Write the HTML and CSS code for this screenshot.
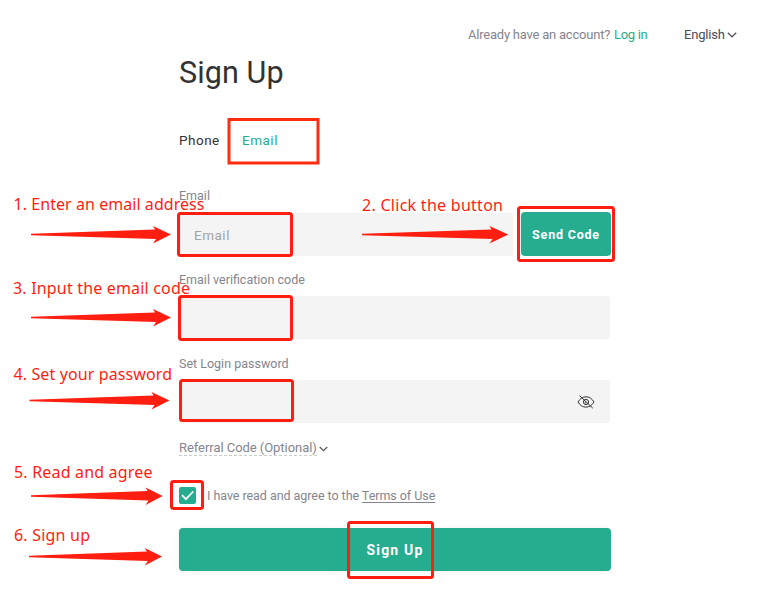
FILE: index.html
```html
<!DOCTYPE html>
<html lang="en">
<head>
<meta charset="utf-8">
<title>Sign Up</title>
<link rel="stylesheet" href="styles.css">
</head>
<body>
<header class="topbar">
  <span class="topbar-hint">Already have an account?</span>
  <a class="login">Log in</a>
  <span class="language">English</span>
  <svg class="chevron" width="10" height="6" viewBox="0 0 10 6"><path d="M.8.8 5 4.8 9.2.8"/></svg>
</header>
<main class="signup">
  <h1>Sign Up</h1>
  <nav class="tabs"><span class="tab">Phone</span><span class="tab active">Email</span></nav>
  <section class="field">
    <label>Email</label>
    <div class="row"><div class="input email"><span>Email</span></div><button class="send">Send Code</button></div>
  </section>
  <section class="field">
    <label>Email verification code</label>
    <div class="input"></div>
  </section>
  <section class="field">
    <label>Set Login password</label>
    <div class="input password">
      <svg width="18" height="14" viewBox="0 0 18 14"><path d="M1 7C3 3.6 5.7 1.8 9 1.8S15 3.6 17 7c-2 3.4-4.7 5.1-8 5.1S3 10.400 1 7Z"/><circle cx="9" cy="7" r="2.6"/><path d="M2.500.600 15.800 13.200"/><path d="m7.800 7.200 1.400 1.100"/></svg>
    </div>
  </section>
  <div class="referral"><span>Referral Code (Optional)</span><svg class="chevron" width="9" height="6" viewBox="0 0 10 6"><path d="M.8.8 5 4.800 9.200.8"/></svg></div>
  <div class="agree">
    <span class="check"><svg width="17" height="17" viewBox="0 0 17 17"><path d="m3 8.200 3.900 3.900 7.300-7.600"/></svg></span>
    <span class="agree-text">I have read and agree to the <a>Terms of Use</a></span>
  </div>
  <button class="submit">Sign Up</button>
</main>
<svg class="guide" width="766" height="598" viewBox="0 0 766 598">
  <defs><path id="arrow" d="M0-.8 124-5l-2-3.500L140 0l-18 9 3-4.600L0 .8Z"/></defs>
  <g class="frames">
    <rect class="square" x="229" y="119.500" width="89" height="43.500"/>
    <rect x="178.500" y="213.500" width="113" height="42" rx="2"/>
    <rect x="179.500" y="296.500" width="112" height="43" rx="2"/>
    <rect x="180.500" y="380.500" width="112" height="40" rx="2"/>
    <rect x="518.500" y="207.500" width="95" height="53" rx="2"/>
    <rect x="171.500" y="481.500" width="31" height="27" rx="2"/>
    <rect x="348.500" y="522.500" width="84" height="55" rx="2"/>
  </g>
  <g class="arrows">
    <use href="#arrow" x="31" y="234.500"/>
    <use href="#arrow" x="31" y="317.500"/>
    <use href="#arrow" x="29.500" y="400.500"/>
    <use href="#arrow" transform="translate(362 234.500) scale(1.045 1)"/>
    <use href="#arrow" transform="translate(31 496) scale(.940 1)"/>
    <use href="#arrow" transform="translate(29 556.500) scale(.950 1)"/>
  </g>
  <g class="steps">
    <text x="13.500" y="210" textLength="191">1. Enter an email address</text>
    <text x="362" y="211" textLength="141">2. Click the button</text>
    <text x="13" y="294" textLength="177">3. Input the email code</text>
    <text x="13.500" y="380" textLength="158.500">4. Set your password</text>
    <text x="14" y="478" textLength="138.500">5. Read and agree</text>
    <text x="14" y="541" textLength="76">6. Sign up</text>
  </g>
</svg>
</body>
</html>
```
FILE: styles.css
```css
* { box-sizing: border-box; }
body { margin: 0; width: 766px; height: 598px; overflow: hidden; background: #fff; position: relative; font: 13px/20px Roboto, "Liberation Sans", sans-serif; color: #85858f; }
h1, button { margin: 0; border: 0; font-family: inherit; }
.topbar { height: 45px; padding: 25px 29px 0 0; display: flex; justify-content: flex-end; align-items: center; white-space: nowrap; }
.topbar-hint { width: 143px; letter-spacing: -.22px; }
.login { width: 34px; margin-left: 3px; color: #26ad8f; letter-spacing: -.3px; }
.language { width: 41px; margin-left: 36px; color: #4b4b5a; letter-spacing: -.2px; }
.chevron { fill: none; stroke: #555562; stroke-width: 1.300; margin-left: 2px; }
.signup { width: 432px; margin-left: 179px; }
h1 { height: 56px; font-size: 30.500px; line-height: 56px; font-weight: 400; color: #333; letter-spacing: .1px; }
.tabs { display: flex; gap: 22px; height: 78px; padding-top: 29px; font-size: 13.500px; letter-spacing: .5px; color: #333; }
.tab { width: 41px; }
.tab.active { color: #26ad8f; }
.field { height: 84px; padding-top: 8px; }
.field label { display: block; height: 26px; font-size: 12.500px; }
.field:first-of-type { height: 83px; padding-top: 7px; }
.field:first-of-type label { height: 27px; }
.row { display: flex; gap: 8px; }
.input { width: 431px; height: 43px; border-radius: 3px; background: #f4f4f4; display: flex; align-items: center; }
.row .input { width: 334px; padding: 1px 0 0 15px; font-size: 13.500px; letter-spacing: .5px; color: #a4a4a4; }
.send { width: 90px; height: 44px; margin-top: -1px; padding: 0; border-radius: 4px; background: #26ad8f; color: #fff; font-size: 12.500px; font-weight: 700; letter-spacing: .8px; }
.password { justify-content: flex-end; padding-right: 15px; }
.password svg { fill: none; stroke: #333; stroke-width: 1; }
.referral { height: 43px; padding-top: 9px; display: flex; align-items: flex-start; }
.referral span { height: 17px; line-height: 18px; letter-spacing: -.05px; border-bottom: 1px dashed #ccc; }
.referral svg { margin-top: 7px; }
.agree { height: 55px; display: flex; align-items: center; padding-bottom: 11px; white-space: nowrap; font-size: 12.500px; letter-spacing: -.05px; }
.check { width: 17px; height: 17px; border-radius: 2px; background: #26ad8f; margin-right: 11px; }
.check svg { display: block; fill: none; stroke: #fff; stroke-width: 1.800; }
.agree-text { padding-top: 2px; }
.agree-text a { text-decoration: underline; text-underline-offset: 2px; }
.submit { display: block; width: 432px; height: 43px; border-radius: 4px; background: #26ad8f; color: #fff; font-size: 14px; font-weight: 700; letter-spacing: 1.200px; box-shadow: 0 1px 6px #0001; }
.guide { position: absolute; left: 0; top: 0; }
.frames { fill: none; stroke: #ff1e10; stroke-width: 3; }
.square { stroke: #ff2d10; }
.arrows, .steps { fill: #ff1e10; }
.steps { font: 16px "Noto Sans", "Open Sans", sans-serif; }
```
